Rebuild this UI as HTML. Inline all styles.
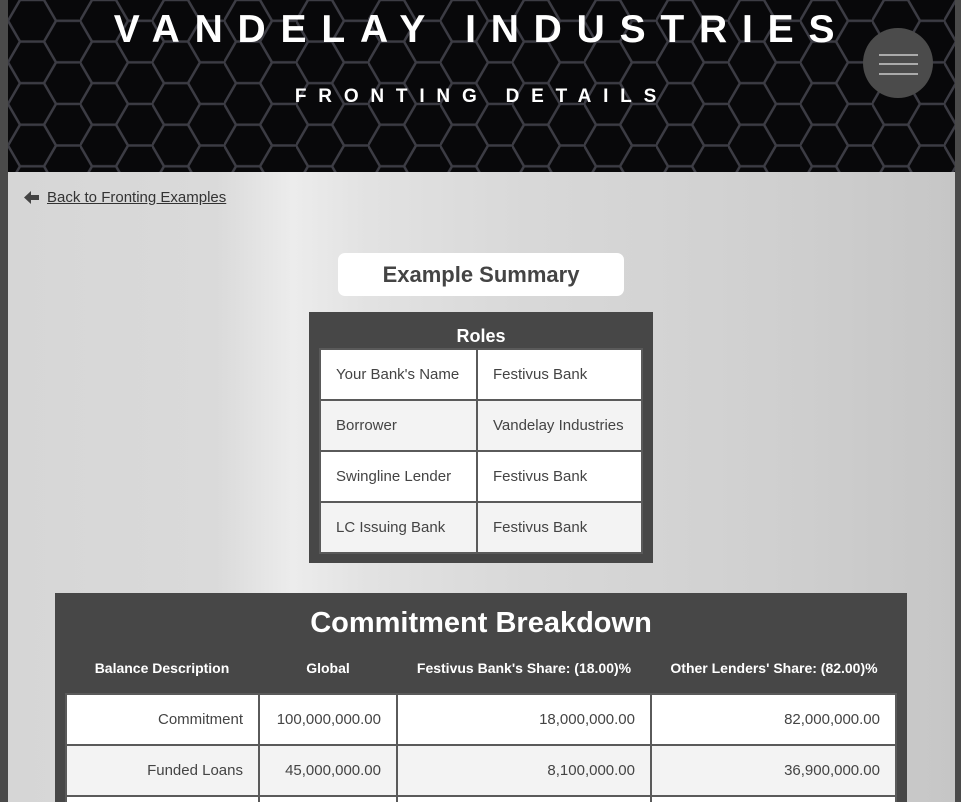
<!DOCTYPE html>
<html><head><meta charset="utf-8"><style>
*{box-sizing:border-box;margin:0;padding:0}
html,body{width:961px;height:802px;overflow:hidden}
body{font-family:"Liberation Sans",Arial,sans-serif;background:#4a4a4a;position:relative}
#page{position:absolute;left:8px;top:0;width:947px;height:802px;background:linear-gradient(90deg,#d6d6d6 0%,#dadada 22%,#ececec 30%,#e2e2e2 38%,#d8d8d8 55%,#d0d0d0 80%,#c6c6c6 100%);overflow:hidden}
#hdr{position:absolute;left:0;top:0;width:947px;height:172px;background:#08080a}
#hdr svg{position:absolute;left:0;top:0}
.t1{position:absolute;left:0;width:947px;top:8px;text-align:center;color:#fff;font-weight:bold;font-size:39px;letter-spacing:14.8px;padding-left:0}
.t2{position:absolute;left:0;width:947px;top:86px;text-align:center;color:#fff;font-weight:bold;font-size:19px;letter-spacing:11.8px;padding-left:0}
.burger{position:absolute;left:855px;top:28px;width:70px;height:70px;border-radius:50%;background:#4b4b4b}
.burger i{position:absolute;left:16px;width:39px;height:2px;background:#aaa}
.back{position:absolute;left:16px;top:189px;font-size:15px;color:#333;display:flex;align-items:center}
.back span{text-decoration:underline;margin-left:8px}
.sum{position:absolute;left:330px;top:253px;width:286px;height:43px;background:#fff;border-radius:7px;text-align:center;font-weight:bold;font-size:22px;color:#444;line-height:44px}
.roles{position:absolute;left:301px;top:312px;width:344px;height:251px;background:#474747}
.roles h3{color:#fff;text-align:center;font-size:18px;line-height:22px;margin-top:13px}
table{border-collapse:collapse}
td{border:2px solid #5a5a5a;font-size:15px;color:#444;height:51px}
.roles table{position:absolute;left:10px;top:36px;width:324px}
.roles td{padding-left:15px}
tr:nth-child(odd) td{background:#fff}
tr:nth-child(even) td{background:#f3f3f3}
.cb{position:absolute;left:47px;top:593px;width:852px;height:260px;background:#474747}
.cb h2{color:#fff;text-align:center;font-size:29px;line-height:34px;margin-top:13px}
.hd{position:absolute;top:67px;color:#fff;font-weight:bold;font-size:14px;text-align:center}
.cb table{position:absolute;left:10px;top:100px;width:832px}
.cb td{text-align:right;padding-right:15px}
</style></head><body>
<div id="page">
<div id="hdr">
<svg width="947" height="172"><defs><pattern id="hx" width="72" height="41.57" patternUnits="userSpaceOnUse"><path d="M0 20.78 L12 0 L36 0 L48 20.78 L36 41.57 L12 41.57 Z M48 20.78 L72 20.78" fill="none" stroke="#3c3c44" stroke-width="2.5"/></pattern></defs><rect width="947" height="172" fill="url(#hx)"/></svg>
<div class="t1">VANDELAY INDUSTRIES</div>
<div class="t2">FRONTING DETAILS</div>
<div class="burger"><i style="top:26px"></i><i style="top:35px"></i><i style="top:45px"></i></div>
</div>
<div class="back"><svg width="15" height="13" viewBox="0 0 15 13"><path d="M0 6.5 L7 0 V4 H15 V9 H7 V13 Z" fill="#444"/></svg><span>Back to Fronting Examples</span></div>
<div class="sum">Example Summary</div>
<div class="roles"><h3>Roles</h3>
<table><tr><td style="width:157px">Your Bank's Name</td><td>Festivus Bank</td></tr>
<tr><td>Borrower</td><td>Vandelay Industries</td></tr>
<tr><td>Swingline Lender</td><td>Festivus Bank</td></tr>
<tr><td>LC Issuing Bank</td><td>Festivus Bank</td></tr></table></div>
<div class="cb"><h2>Commitment Breakdown</h2>
<div class="hd" style="left:10px;width:194px">Balance Description</div>
<div class="hd" style="left:204px;width:138px">Global</div>
<div class="hd" style="left:342px;width:254px">Festivus Bank's Share: (18.00)%</div>
<div class="hd" style="left:596px;width:246px">Other Lenders' Share: (82.00)%</div>
<table><tr><td style="width:193px">Commitment</td><td style="width:138px">100,000,000.00</td><td style="width:254px">18,000,000.00</td><td>82,000,000.00</td></tr>
<tr><td>Funded Loans</td><td>45,000,000.00</td><td>8,100,000.00</td><td>36,900,000.00</td></tr>
<tr><td>&nbsp;</td><td></td><td></td><td></td></tr></table></div>
</div>
</body></html>
